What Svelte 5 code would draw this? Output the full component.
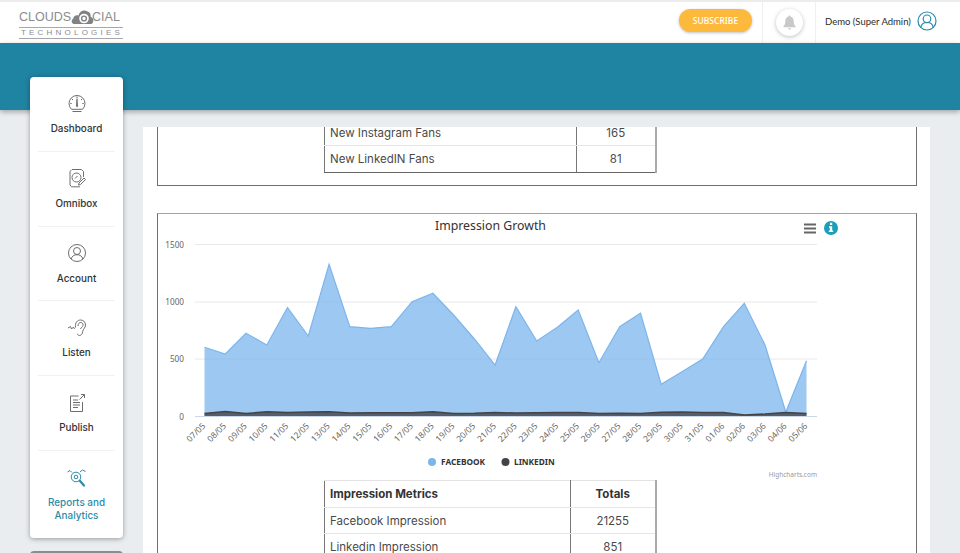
<script>
  const labels = ['07/05','08/05','09/05','10/05','11/05','12/05','13/05','14/05','15/05','16/05','17/05','18/05','19/05','20/05','21/05','22/05','23/05','24/05','25/05','26/05','27/05','28/05','29/05','30/05','31/05','01/06','02/06','03/06','04/06','05/06'];
  const fb = [347.3,354,333.3,345,307.7,336,264.3,326.7,328.3,326.7,301.7,293.3,315,339,365,306.7,341,327.3,310,362.7,326.7,313.3,384.3,371.7,359,326.7,303.3,345,412,360.7];
  const li = [413.5,411.5,413.5,411.8,412.6,412,411.8,413,412.8,412.8,412.8,411.8,413.5,413.3,412.6,413,412.8,412.6,412.4,413.6,413.3,413.5,412.3,412,412.6,412.4,415,414,412.4,413.4];
  const xAt = (i) => 204.5 + i * 20.76;
  const line = (ys) => ys.map((y, i) => `${xAt(i).toFixed(1)},${y}`).join(' ');
  const area = (ys) => `${xAt(0)},416 ${line(ys)} ${xAt(29).toFixed(1)},416`;
  const yTicks = [['1500', 244.5], ['1000', 302], ['500', 359], ['0', 416.5]];
</script>

<div class="page">
  <header class="top">
    <div class="logo">
      <div class="logo-row">
        <span>CLOUDS</span>
        <svg class="cloud" viewBox="0 0 24 16" width="24" height="16">
          <path class="cloud-fill" d="M3 15c-2.500 0-3.300-4-.8-5.200C2.500 6.500 5.500 5.500 7.500 6.500 8.500 2 13 0 16.500 2.500c2.500.5 3.500 3 3 5 3 1 4 6 1 7.500z"/>
          <circle class="cloud-hole" cx="13" cy="9.500" r="4.800"/>
          <circle class="cloud-in" cx="13" cy="9.500" r="2.400"/>
        </svg>
        <span>CIAL</span>
      </div>
      <div class="logo-sub">TECHNOLOGIES</div>
    </div>
    <div class="top-right">
      <button class="subscribe">SUBSCRIBE</button>
      <div class="bell-cell">
        <span class="bell">
          <svg viewBox="0 0 14 16" width="13" height="15"><path class="bell-path" d="M7 0.500c.8 0 1.300.6 1.300 1.300 2.200.6 3.200 2.400 3.200 4.700 0 3 .7 4.300 2 5.500v1H.5v-1c1.300-1.200 2-2.500 2-5.500 0-2.300 1-4.100 3.200-4.700C5.700 1.100 6.200.5 7 .5zM5.200 14.300h3.600C8.600 15.300 7.900 15.800 7 15.800s-1.600-.5-1.800-1.500z"/></svg>
        </span>
      </div>
      <div class="user">
        <span>Demo (Super Admin)</span>
        <svg viewBox="0 0 20 20" width="20" height="20">
          <circle class="ui" cx="10" cy="10" r="9"/>
          <circle class="ui" cx="10" cy="7.800" r="3.800"/>
          <path class="ui" d="M3.800 16.300c.6-3.300 3-4.800 6.200-4.800s5.600 1.500 6.200 4.800"/>
        </svg>
      </div>
    </div>
  </header>
  <div class="band"></div>

  <div class="shell">
    <aside class="side">
      <nav class="card">
        <a class="item">
          <svg viewBox="0 0 20 20" width="20" height="20">
            <path class="ic" d="M4.500 15.300A8 8 0 1 1 15.500 15.300"/>
            <path class="ic" d="M4.500 15.300h11M5.500 17.500h9M10 2.500v1.500M5 5l1 1M15 5l-1 1M3.200 9.500h1.500M15.300 9.500h1.500"/>
            <path class="ic-solid" d="M9.400 4.500h1.200l.4 7.500a1 1 0 0 1-2 0z"/>
          </svg>
          <span>Dashboard</span>
        </a>
        <a class="item">
          <svg viewBox="0 0 20 20" width="20" height="20">
            <path class="ic" d="M5 1.500h9.500l2 2V9M4.500 1.800 3 3.500v13.500l1.500 1.800H13"/>
            <circle class="ic" cx="9.500" cy="9.500" r="4.500"/>
            <path class="ic" d="M8 10.500 10.500 8M12 15l5-5 1.500 1.500-5 5-2 .5z"/>
          </svg>
          <span>Omnibox</span>
        </a>
        <a class="item">
          <svg viewBox="0 0 20 20" width="20" height="20">
            <circle class="ic" cx="10" cy="10" r="8.500"/>
            <circle class="ic" cx="10" cy="8" r="3.500"/>
            <path class="ic" d="M4.200 16c.6-2.800 2.800-4.300 5.800-4.300s5.200 1.500 5.800 4.300"/>
          </svg>
          <span>Account</span>
        </a>
        <a class="item">
          <svg viewBox="0 0 20 20" width="20" height="20">
            <path class="ic" d="M8.500 9.500C7.800 4.500 10.500 2 13.500 2c3 0 5 2.200 5 5 0 3-2.500 4-2.800 6.500-.3 2.500-1.500 4-3.200 4-1.300 0-2-.8-2.200-1.800"/>
            <path class="ic" d="M11 8c0-2.300 1.200-3.500 2.800-3.500S16.300 6 16 7.500c-.3 1.500-2 2-2.500 3.500M1 10l2.500-1.500L4.500 11 6.500 9 7.500 11"/>
          </svg>
          <span>Listen</span>
        </a>
        <a class="item">
          <svg viewBox="0 0 20 20" width="20" height="20">
            <path class="ic" d="M11.500 3H3.500v15.500h12V9"/>
            <path class="ic" d="M6 7h5M6 9.500h7M6 12h7M6 14.500h5M12.500 6.500 17.500 1.500M14 1.500h3.500V5"/>
          </svg>
          <span>Publish</span>
        </a>
        <a class="item active">
          <svg viewBox="0 0 20 20" width="20" height="20">
            <circle class="ic-t" cx="9" cy="9" r="4.800"/>
            <circle class="ic-t" cx="9" cy="9" r="1.800"/>
            <path class="ic-thick" d="M12.800 12.800 17 17.500"/>
            <path class="ic-t" d="M0.500 4 3 2.500 5 4.500M13 4 15.500 2 18.500 3.500"/>
          </svg>
          <span>Reports and Analytics</span>
        </a>
      </nav>
      <div class="card-next"></div>
    </aside>

    <main class="content">
      <div class="scroll">
        <section class="box box-a">
          <table class="metrics a">
            <tbody>
              <tr><td>New Instagram Fans</td><td>165</td></tr>
              <tr><td>New LinkedIN Fans</td><td>81</td></tr>
            </tbody>
          </table>
        </section>

        <section class="box box-b">
          <svg class="chart" viewBox="158 214 758 266" width="758" height="266">
            {#each yTicks.slice(0, 3) as t}
              <line class="grid" x1="195" x2="817" y1={t[1]} y2={t[1]}/>
            {/each}
            <line class="axis" x1="195" x2="817" y1="416.500" y2="416.500"/>
            {#each yTicks as t}
              <text class="ylab" x="184" y={t[1] + 3}>{t[0]}</text>
            {/each}

            <polygon class="fb-area" points={area(fb)}/>
            <polyline class="fb-line" points={line(fb)}/>
            <polygon class="li-area" points={area(li)}/>
            <polyline class="li-line" points={line(li)}/>

            {#each labels as l, i}
              <text class="xlab" transform={`translate(${xAt(i) + 1.5} 426.5) rotate(-45)`}>{l}</text>
            {/each}

            <text class="title" x="490.500" y="230">Impression Growth</text>
            <path class="menu" d="M804 224.500h12M804 228.500h12M804 232.500h12"/>
            <circle class="info" cx="831" cy="228" r="7"/>
            <path class="info-i" d="M830 222.800h2.200v2.200H830zM829 226.200h3.200v4.300h1v1.600h-4.400v-1.600h1v-2.700h-.8z"/>

            <circle class="dot-fb" cx="432" cy="462" r="4"/>
            <text class="legend" x="441" y="465.200">FACEBOOK</text>
            <circle class="dot-li" cx="505.500" cy="462" r="4"/>
            <text class="legend" x="514" y="465.200">LINKEDIN</text>
            <text class="credit" x="817" y="477">Highcharts.com</text>
          </svg>

          <table class="metrics b">
            <thead>
              <tr><th>Impression Metrics</th><th>Totals</th></tr>
            </thead>
            <tbody>
              <tr><td>Facebook Impression</td><td>21255</td></tr>
              <tr><td>Linkedin Impression</td><td>851</td></tr>
            </tbody>
          </table>
        </section>
      </div>
    </main>
  </div>
</div>

<style>
  :global(body) {
    margin: 0;
    background: #e9edf0;
    overflow: hidden;
  }
  .page {
    width: 960px;
    height: 553px;
    overflow: hidden;
    background: #e9edf0;
    font-family: Inter, "Noto Sans", sans-serif;
  }
  .top {
    height: 41px;
    border-top: 2px solid #ececec;
    background: #fff;
    display: flex;
    justify-content: space-between;
    align-items: stretch;
    box-sizing: content-box;
  }
  .logo {
    margin-left: 19px;
    width: 104px;
    color: #8a8c8e;
    display: flex;
    flex-direction: column;
    padding-top: 7px;
  }
  .logo-row {
    display: flex;
    align-items: flex-end;
    height: 16px;
    font-family: "Liberation Sans", sans-serif;
    font-size: 12.500px;
    line-height: 15px;
    white-space: nowrap;
  }
  .cloud { margin: 0 -3px 0 0; flex: none; }
  .cloud-fill { fill: #808284; }
  .cloud-hole { fill: #fff; }
  .cloud-in { fill: none; stroke: #808284; stroke-width: 1.4; }
  .logo-sub {
    margin-top: 2px;
    border-top: 1px solid #a8a8a8;
    border-bottom: 1px solid #a8a8a8;
    font-family: "Liberation Sans", sans-serif;
    font-size: 8px;
    line-height: 10px;
    letter-spacing: 3.200px;
    white-space: nowrap;
    text-indent: 2px;
  }
  .top-right {
    display: flex;
    align-items: stretch;
  }
  .subscribe {
    align-self: flex-start;
    margin: 7px 10px 0 0;
    width: 73px;
    height: 23px;
    padding: 0;
    border: 0;
    border-radius: 12px;
    background: #fdb93b;
    color: #fff;
    font-family: "Noto Sans", sans-serif;
    font-size: 8.500px;
    font-weight: 500;
    box-shadow: 0 1px 3px rgba(0, 0, 0, 0.25);
  }
  .bell-cell {
    width: 54px;
    border-left: 1px solid #f0f0f0;
    border-right: 1px solid #f0f0f0;
    box-sizing: border-box;
    display: flex;
    align-items: flex-start;
    justify-content: center;
    padding-top: 7px;
  }
  .bell {
    width: 27px;
    height: 27px;
    border-radius: 50%;
    background: #fff;
    box-shadow: 0 1px 4px rgba(0, 0, 0, 0.25);
    display: flex;
    align-items: center;
    justify-content: center;
  }
  .bell-path { fill: #c9c9c9; }
  .user {
    width: 144px;
    box-sizing: border-box;
    padding: 0 23px 3px 9px;
    display: flex;
    align-items: center;
    justify-content: space-between;
    font-family: Lato, "Noto Sans", sans-serif;
    font-size: 9.500px;
    color: #2b2b2b;
    white-space: nowrap;
  }
  .ui { fill: none; stroke: #2a8caa; stroke-width: 1.200; }
  .band {
    height: 67px;
    background: #1f83a2;
    box-shadow: 0 2px 5px rgba(0, 0, 0, 0.3);
    position: relative;
  }
  .shell {
    display: flex;
    align-items: flex-start;
    margin-top: -33px;
    padding-left: 30px;
    position: relative;
  }
  .side {
    width: 93px;
    flex: none;
  }
  .card {
    height: 461px;
    background: #fff;
    border-radius: 4px;
    box-shadow: 0 1px 5px rgba(0, 0, 0, 0.35);
    padding: 0 8px;
    box-sizing: border-box;
    display: flex;
    flex-direction: column;
  }
  .item {
    height: 74.800px;
    flex: none;
    box-sizing: border-box;
    border-bottom: 1px solid #f1f1f1;
    display: flex;
    flex-direction: column;
    align-items: center;
    padding-top: 16.500px;
    gap: 8.500px;
    font-size: 9.900px;
    font-weight: 500;
    color: #333;
    text-align: center;
    line-height: 13px;
  }
  .item.active {
    border-bottom: 0;
    color: #2a8caa;
    padding-top: 17px;
    gap: 8.500px;
    padding-inline: 6px;
  }
  .ic, .ic-t { fill: none; stroke: #6e6e6e; stroke-width: 1; }
  .ic-solid { fill: #6e6e6e; }
  .ic-t { stroke: #2a8caa; }
  .ic-thick { fill: none; stroke: #2a8caa; stroke-width: 2.200; stroke-linecap: round; }
  .card-next {
    margin-top: 13px;
    height: 20px;
    border-radius: 4px;
    background: #8b8b8b;
  }
  .content {
    margin: 50px 0 0 20px;
    width: 787px;
    height: 426px;
    background: #fff;
    overflow: hidden;
  }
  .scroll {
    padding: 0 14px;
    margin-top: -40px;
  }
  .box {
    width: 760px;
    box-sizing: border-box;
    border: 1px solid #6f6f6f;
  }
  .box-a {
    height: 99px;
    padding: 30px 0 0 166px;
  }
  .box-b {
    margin-top: 27px;
    border-top-color: #a5a5a5;
    height: 400px;
  }
  .chart { display: block; }
  .metrics {
    border-collapse: collapse;
    width: 333px;
    table-layout: fixed;
    font-size: 11.500px;
    color: #4a4a4a;
    border-left: 1px solid #777;
    border-right: 2px solid #aaa;
  }
  .metrics td, .metrics th {
    padding: 0 0 0 5px;
    height: 27px;
    text-align: left;
    border-bottom: 1px solid #e6e6e6;
    box-sizing: border-box;
    white-space: nowrap;
  }
  .metrics td + td, .metrics th + th {
    text-align: center;
    padding: 0;
    border-left: 1px solid #777;
  }
  .a { margin: 0; }
  .a td + td { width: 80px; }
  .a tbody tr:first-child td { padding-top: 3px; }
  .a tbody tr:last-child td { border-bottom: 1px solid #666; }
  .b { margin: 0 0 0 166px; border-top: 1px solid #e3e3e3; }
  .b td { height: 26px; }
  .b th { font-weight: 700; color: #333; height: 27px; }
  .b td + td, .b th + th { width: 86px; }

  .grid { stroke: #e8e8e8; stroke-width: 1; }
  .axis { stroke: #ccd6eb; stroke-width: 1; }
  .ylab, .xlab, .title, .legend, .credit { font-family: "Noto Sans", sans-serif; }
  .ylab { font-size: 8.200px; fill: #666; text-anchor: end; }
  .xlab { font-size: 8.500px; fill: #666; text-anchor: end; }
  .title { font-size: 12.300px; fill: #333; text-anchor: middle; }
  .fb-area { fill: #7cb5ec; fill-opacity: 0.75; }
  .fb-line { fill: none; stroke: #7cb5ec; stroke-width: 1.200; }
  .li-area { fill: #434348; fill-opacity: 0.8; }
  .li-line { fill: none; stroke: #434348; stroke-width: 1.500; }
  .menu { stroke: #666; stroke-width: 2; fill: none; }
  .info { fill: #1a9fb8; }
  .info-i { fill: #fff; }
  .dot-fb { fill: #7cb5ec; }
  .dot-li { fill: #434348; }
  .legend { font-size: 8.300px; font-weight: 700; fill: #333; }
  .credit { font-size: 6.500px; fill: #999; text-anchor: end; }
</style>
